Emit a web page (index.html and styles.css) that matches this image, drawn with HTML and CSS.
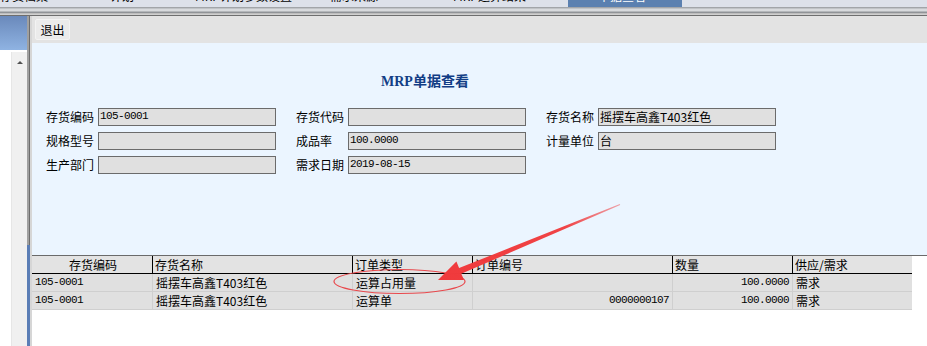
FILE: index.html
```html
<!DOCTYPE html>
<html lang="zh-CN">
<head>
<meta charset="utf-8">
<title>MRP单据查看</title>
<link rel="stylesheet" href="styles.css">
</head>
<body>
<div class="app">
  <nav class="tabbar">
    <span class="tab t1"><span class="tab-text">存货档案</span></span>
    <span class="tab t2"><span class="tab-text">计划</span></span>
    <span class="tab t3"><span class="tab-text">MRP计划参数设置</span></span>
    <span class="tab t4"><span class="tab-text">需求来源</span></span>
    <span class="tab t5"><span class="tab-text">MRP运算结果</span></span>
    <span class="tab active"><span class="tab-text">单据查看</span></span>
  </nav>
  <div class="stripe"></div>
  <div class="workspace">
    <aside class="sidebar">
      <div class="side-head"></div>
      <div class="side-body">
        <div class="side-blank"></div>
        <div class="scrollbar"><span class="arrow-up"></span></div>
      </div>
    </aside>
    <div class="divider"><div class="div-top"></div><div class="div-bottom"></div></div>
    <main class="main">
      <div class="toolbar"><button class="btn" type="button">退出</button></div>
      <section class="form">
        <h1 class="title">MRP单据查看</h1>
        <div class="fields">
          <div class="field"><span class="label">存货编码</span><div class="input mono">105-0001</div></div>
          <div class="field"><span class="label">存货代码</span><div class="input"></div></div>
          <div class="field"><span class="label">存货名称</span><div class="input">摇摆车高鑫T403红色</div></div>
          <div class="field"><span class="label">规格型号</span><div class="input"></div></div>
          <div class="field"><span class="label">成品率</span><div class="input mono">100.0000</div></div>
          <div class="field"><span class="label">计量单位</span><div class="input">台</div></div>
          <div class="field"><span class="label">生产部门</span><div class="input"></div></div>
          <div class="field"><span class="label">需求日期</span><div class="input mono">2019-08-15</div></div>
        </div>
      </section>
      <table class="grid">
        <colgroup>
          <col class="c-code"><col class="c-name"><col class="c-type"><col class="c-no"><col class="c-qty"><col class="c-sd">
        </colgroup>
        <thead>
          <tr><th class="center">存货编码</th><th>存货名称</th><th>订单类型</th><th>订单编号</th><th>数量</th><th>供应/需求</th></tr>
        </thead>
        <tbody>
          <tr><td class="mono">105-0001</td><td>摇摆车高鑫T403红色</td><td>运算占用量</td><td class="mono right"></td><td class="mono right">100.0000</td><td>需求</td></tr>
          <tr><td class="mono">105-0001</td><td>摇摆车高鑫T403红色</td><td>运算单</td><td class="mono right">0000000107</td><td class="mono right">100.0000</td><td>需求</td></tr>
        </tbody>
      </table>
    </main>
  </div>
  <svg class="annot" width="927" height="346" viewBox="0 0 927 346" aria-hidden="true">
    <defs>
      <linearGradient id="fade" x1="438" y1="280" x2="620" y2="205" gradientUnits="userSpaceOnUse">
        <stop offset="0" stop-color="#f03a3c" stop-opacity="1"/>
        <stop offset="0.7" stop-color="#f03a3c" stop-opacity="0.95"/>
        <stop offset="1" stop-color="#f03a3c" stop-opacity="0.45"/>
      </linearGradient>
    </defs>
    <ellipse cx="399.5" cy="281.5" rx="65.5" ry="12" fill="none" stroke="#e8484c" stroke-width="1.2"/>
    <polygon fill="url(#fade)" points="438,280 456.4,261.6 459.1,268.1 619.8,204.0 620.2,205.1 461.3,273.7 464.0,280.1"/>
  </svg>
</div>
</body>
</html>
```
FILE: styles.css
```css
* { box-sizing: border-box; margin: 0; padding: 0; }
html, body { width: 927px; height: 346px; overflow: hidden; background: #fff; }
body {
  font-family: "Noto Sans CJK SC", "Liberation Sans", sans-serif;
  font-size: 12px;
  color: #000;
}
.app { position: relative; width: 927px; height: 346px; display: flex; flex-direction: column; }

/* top tabs (cut off by the screenshot edge) */
.tabbar { height: 7px; flex: none; display: flex; background: #dde1ea; overflow: hidden; }
.tab { flex: none; height: 7px; overflow: hidden; }
.tab-text { display: block; line-height: 12px; margin-top: -10px; white-space: nowrap; }
.t1 { width: 110px; }
.t2 { width: 85px; }
.t3 { width: 135px; }
.t4 { width: 123px; }
.t5 { width: 115px; }
.active { width: 114px; padding-left: 30px; background: #5b80b0; color: #fff; }

.stripe {
  height: 9px; flex: none;
  background: linear-gradient(to bottom,
    #a2a5a9 0, #a2a5a9 1px,
    #c0c3c7 1px, #c0c3c7 2px,
    #d8dadd 2px, #d8dadd 4px,
    #b4b7ba 4px, #b4b7ba 5px,
    #909397 5px, #909397 6px,
    #bdbdbd 6px, #bdbdbd 7px,
    #d0d0d0 7px, #d0d0d0 8px,
    #6e6e6e 8px, #6e6e6e 9px);
}

.workspace { flex: 1; display: flex; min-height: 0; }

/* left navigation remnant */
.sidebar { width: 27px; flex: none; display: flex; flex-direction: column; background: #fff; }
.side-head { height: 34px; background: linear-gradient(to bottom, #6a89bb, #8fb3e2); }
.side-body { flex: 1; display: flex; padding-top: 2px; }
.side-blank { width: 11px; }
.scrollbar { width: 16px; background: #f0f0f0; border-left: 1px solid #e6e6e6; display: flex; justify-content: center; padding-top: 9px; }
.arrow-up { width: 0; height: 0; border-left: 3px solid transparent; border-right: 3px solid transparent; border-bottom: 3px solid #505050; }

.divider { width: 5px; flex: none; display: flex; flex-direction: column; }
.div-top { flex: 1; background: linear-gradient(to right, #a0a0a0 0, #a0a0a0 2px, #6d6d6d 2px, #6d6d6d 3px, #d6d6d6 3px); }
.div-bottom { height: 101px; background: linear-gradient(to right, #5b7eb6 0, #5b7eb6 3px, #d6d6d6 3px); }

.main { flex: 1; display: flex; flex-direction: column; background: #fff; min-width: 0; }

.toolbar { height: 27px; flex: none; background: #e3e3e3; padding: 3px 0 0 3px; }
.btn {
  display: block; width: 35px; height: 21px;
  font-family: inherit; font-size: 12px; line-height: 19px; color: #000;
  background: #ebebeb; border: 1px solid #f3f3f3; border-radius: 2px;
}

.form { height: 213px; flex: none; background: #ebf5ff; border-bottom: 1px solid #6a6a6a; padding: 30px 0 0 14px; }
.title {
  height: 18px; line-height: 18px; padding-left: 335px; margin-bottom: 17px;
  font-family: "Liberation Serif", "Noto Sans CJK SC", serif;
  font-size: 14px; font-weight: bold; color: #123d85;
}
.fields { display: grid; grid-template-columns: repeat(3, 230px); column-gap: 20px; row-gap: 6px; }
.field { display: flex; align-items: center; height: 18px; }
.label { width: 52px; flex: none; line-height: 18px; white-space: nowrap; }
.input {
  width: 178px; height: 18px; flex: none;
  background: #e0e0e0; border: 1px solid #6b6b6b;
  padding-left: 1px; line-height: 15px; white-space: nowrap; overflow: hidden;
}
.mono { font-family: "Liberation Mono", "Noto Sans CJK SC", monospace; font-size: 11px; letter-spacing: -0.6px; }

.grid { width: 880px; table-layout: fixed; border-collapse: separate; border-spacing: 0; }
.c-code { width: 120px; }
.c-name { width: 200px; }
.c-type { width: 120px; }
.c-no { width: 200px; }
.c-qty { width: 120px; }
.c-sd { width: 120px; }
.grid th {
  font-weight: normal; text-align: left; background: #e3e3e3;
  line-height: 17px; padding: 0 0 0 2px;
  border-bottom: 1px solid #000; border-left: 1px solid #000;
  white-space: nowrap;
}
.grid th:first-child { border-left: 0; }
.grid th.center { text-align: center; }
.grid td {
  background: #e0e0e0; line-height: 17px; padding: 0 3px;
  border-bottom: 1px solid #cfcfcf; border-left: 1px solid #cfcfcf;
  white-space: nowrap; overflow: hidden;
}
.grid td:first-child { border-left: 0; }
.grid td.mono { font-size: 11px; }
.grid td.right { text-align: right; }

.annot { position: absolute; left: 0; top: 0; pointer-events: none; }
```
